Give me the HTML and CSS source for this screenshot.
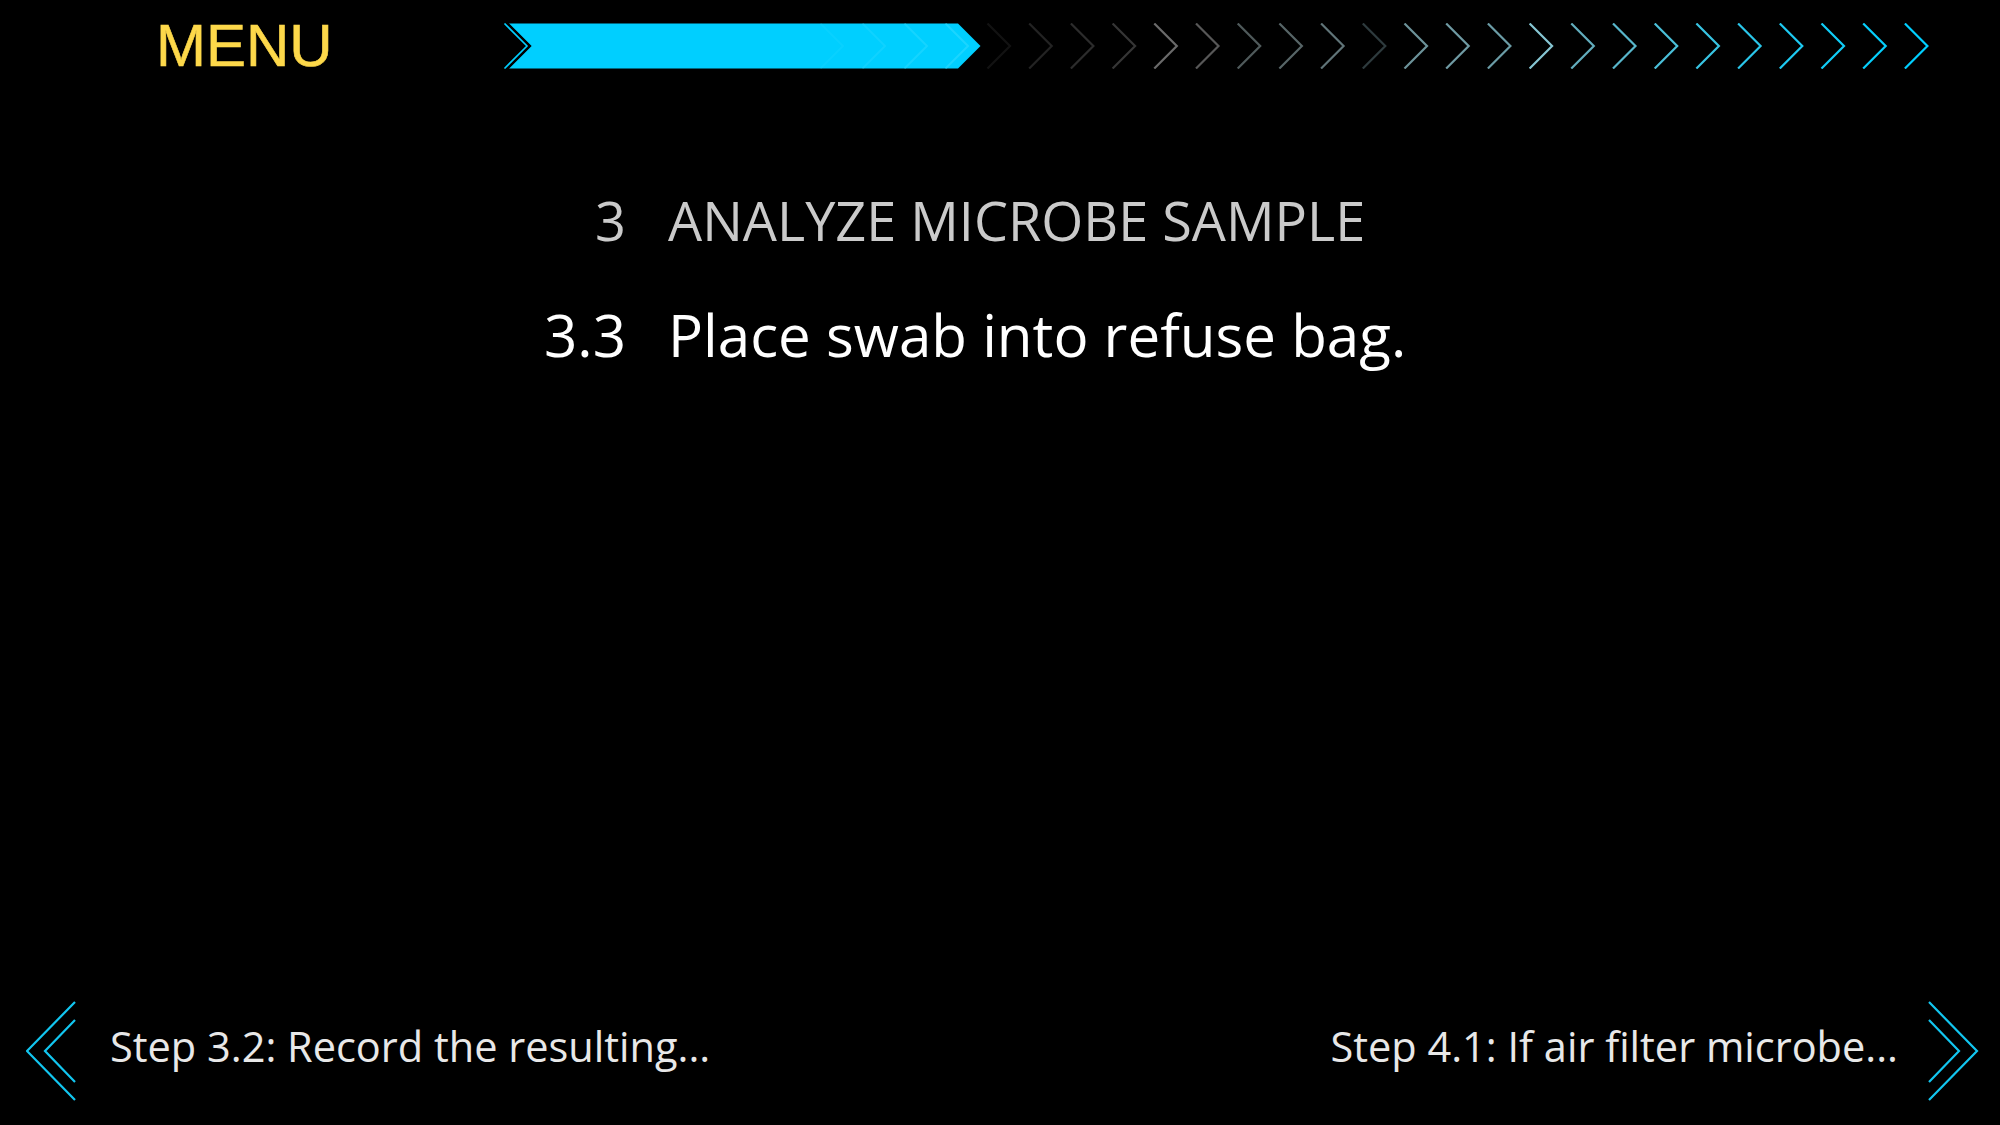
FILE: index.html
```html
<!DOCTYPE html>
<html lang="en">
<head>
<meta charset="utf-8">
<title>Procedure Step</title>
<link rel="stylesheet" href="styles.css">
</head>
<body>
<div class="screen">
  <header class="topbar">
    <div class="menu">MENU</div>
    <svg class="progress" width="1440" height="46" viewBox="0 0 1440 46">
      <polygon points="9,0.5 458,0.5 480.5,23 458,45.5 9,45.5 31.5,23" fill="#00cfff"/>
      <polyline points="7.5,0.5 30,23 7.5,45.5" fill="none" stroke="#000" stroke-width="2"/>
      <polyline points="4.5,0.5 27,23 4.5,45.5" fill="none" stroke="#00cfff" stroke-width="1.6"/>
      <g fill="none" stroke="#3fdcff" stroke-width="2">
        <polyline points="320.5,0.5 343,23 320.5,45.5" stroke-opacity="0.15"/>
        <polyline points="362.5,0.5 385,23 362.5,45.5" stroke-opacity="0.25"/>
        <polyline points="404.5,0.5 427,23 404.5,45.5" stroke-opacity="0.35"/>
        <polyline points="445.5,0.5 468,23 445.5,45.5" stroke-opacity="0.45"/>
      </g>
      <g fill="none" stroke-width="2.2">
        <polyline points="487.5,0.5 510,23 487.5,45.5" stroke="#121212"/>
        <polyline points="529.2,0.5 551.7,23 529.2,45.5" stroke="#232323"/>
        <polyline points="570.9,0.5 593.4,23 570.9,45.5" stroke="#2c2c2c"/>
        <polyline points="612.6,0.5 635.1,23 612.6,45.5" stroke="#363636"/>
        <polyline points="654.3,0.5 676.8,23 654.3,45.5" stroke="#6a6a6a"/>
        <polyline points="696,0.5 718.5,23 696,45.5" stroke="#575757"/>
        <polyline points="737.7,0.5 760.2,23 737.7,45.5" stroke="#4f5a5b"/>
        <polyline points="779.4,0.5 801.9,23 779.4,45.5" stroke="#576567"/>
        <polyline points="821.1,0.5 843.6,23 821.1,45.5" stroke="#607478"/>
        <polyline points="862.8,0.5 885.3,23 862.8,45.5" stroke="#2e3b3e"/>
        <polyline points="904.5,0.5 927,23 904.5,45.5" stroke="#6c9299"/>
        <polyline points="946.2,0.5 968.7,23 946.2,45.5" stroke="#6f9aa3"/>
        <polyline points="987.9,0.5 1010.4,23 987.9,45.5" stroke="#6b9ca6"/>
        <polyline points="1029.6,0.5 1052.1,23 1029.6,45.5" stroke="#86c6d3"/>
        <polyline points="1071.3,0.5 1093.8,23 1071.3,45.5" stroke="#62adbd"/>
        <polyline points="1113,0.5 1135.5,23 1113,45.5" stroke="#58b6cb"/>
        <polyline points="1154.7,0.5 1177.2,23 1154.7,45.5" stroke="#4abfd8"/>
        <polyline points="1196.4,0.5 1218.9,23 1196.4,45.5" stroke="#38c4e2"/>
        <polyline points="1238.1,0.5 1260.6,23 1238.1,45.5" stroke="#2ac6ea"/>
        <polyline points="1279.8,0.5 1302.3,23 1279.8,45.5" stroke="#1ecaf2"/>
        <polyline points="1321.5,0.5 1344,23 1321.5,45.5" stroke="#10cdf8"/>
        <polyline points="1363.2,0.5 1385.7,23 1363.2,45.5" stroke="#06cffc"/>
        <polyline points="1404.9,0.5 1427.4,23 1404.9,45.5" stroke="#00cfff"/>
      </g>
    </svg>
  </header>

  <main class="content">
    <div class="steps">
      <div class="num heading">3</div>
      <div class="txt heading">ANALYZE MICROBE SAMPLE</div>
      <div class="num step">3.3</div>
      <div class="txt step">Place swab into refuse bag.</div>
    </div>
  </main>

  <footer class="nav">
    <div class="nav-item prev">
      <svg class="chev" width="52" height="100" viewBox="0 0 52 100">
        <polyline points="49,1 1,50 49,99" fill="none" stroke="#12c6f0" stroke-width="2.2"/>
        <polyline points="49,19 19,50 49,81" fill="none" stroke="#12c6f0" stroke-width="2.2"/>
      </svg>
      <span class="nav-text">Step 3.2: Record the resulting...</span>
    </div>
    <div class="nav-item next">
      <span class="nav-text">Step 4.1: If air filter microbe...</span>
      <svg class="chev" width="52" height="100" viewBox="0 0 52 100">
        <polyline points="2,1 50,50 2,99" fill="none" stroke="#12c6f0" stroke-width="2.2"/>
        <polyline points="2,19 32,50 2,81" fill="none" stroke="#12c6f0" stroke-width="2.2"/>
      </svg>
    </div>
  </footer>
</div>
</body>
</html>
```

FILE: styles.css
```css
html, body {
  margin: 0;
  padding: 0;
  background: #000;
}

.screen {
  width: 2000px;
  height: 1125px;
  display: flex;
  flex-direction: column;
  background: #000;
  overflow: hidden;
  font-family: "Open Sans", "Noto Sans", sans-serif;
}

.topbar {
  height: 91px;
  display: flex;
  align-items: center;
  padding-left: 156px;
  flex: none;
}

.menu {
  width: 344px;
  font-family: "Liberation Sans", Arial, sans-serif;
  font-size: 60px;
  line-height: 69px;
  color: #fdd84a;
  letter-spacing: 0;
  -webkit-text-stroke: 0.6px #fdd84a;
}

.progress {
  display: block;
  flex: none;
}

.content {
  flex: 1;
  padding-top: 93px;
  padding-left: 506px;
}

.steps {
  display: grid;
  grid-template-columns: 120px auto;
  column-gap: 42px;
  row-gap: 38px;
  justify-content: start;
}

.num {
  text-align: right;
}

.heading {
  font-size: 54px;
  line-height: 73px;
  color: #cacaca;
}

.step {
  font-size: 58.3px;
  line-height: 79px;
  color: #ffffff;
}

.nav {
  flex: none;
  display: flex;
  justify-content: space-between;
  align-items: center;
  padding: 0 21px 24px 26px;
}

.nav-item {
  display: flex;
  align-items: center;
}

.prev {
  gap: 32px;
}

.next {
  gap: 29px;
}

.chev {
  display: block;
  flex: none;
}

.nav-text {
  font-size: 41.5px;
  line-height: 56px;
  color: #e8e8e8;
  padding-bottom: 10px;
}
```
